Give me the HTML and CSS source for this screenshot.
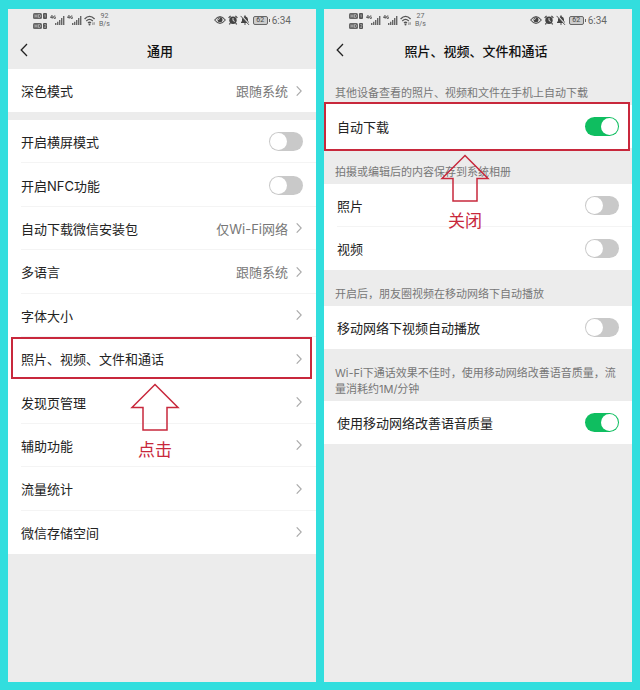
FILE: index.html
```html
<!DOCTYPE html>
<html lang="zh-CN">
<head>
    <meta charset="UTF-8">
    <meta name="viewport" content="width=device-width, initial-scale=1.0">
    <title>通用</title>
    <link rel="stylesheet" href="styles.css">
</head>
<body>
    <svg class="sprite" aria-hidden="true">
        <symbol id="i-hd" viewBox="0 0 15 17">
            <rect x="0" y="1" width="9" height="6" rx="1.5" fill="#666"/>
            <rect x="10" y="1" width="4" height="6" rx="1" fill="#555"/>
            <rect x="0" y="11" width="9" height="6" rx="1.5" fill="#666"/>
            <rect x="10" y="11" width="4" height="6" rx="1" fill="#555"/>
            <path d="M2 2.5v3M4 2.5v3M2 4h2M5.5 2.5v3h1l1-1v-1l-1-1zM2 12.5v3M4 12.5v3M2 14h2M5.5 12.5v3h1l1-1v-1l-1-1zM11.5 3l.7-.5v3M11.2 12.6h1.6v1.2l-1.4 1.6h1.6" fill="none" stroke="#ccc" stroke-width=".6"/>
        </symbol>
        <symbol id="i-signal" viewBox="0 0 15 12">
            <path d="M1.8 1.3L.5 3.5h2.2M2.2 1.3v3.4M5.4 2H4L3.5 3 4 4.4h1.4V3.2h-.6" fill="none" stroke="#555" stroke-width=".9"/>
            <path d="M5 9h1.4v2H5zM7 7.8h1.4V11H7zM9 6h1.4v5H9zM11 4h1.4v7H11zM13 2h1.4v9H13z" fill="#666"/>
        </symbol>
        <symbol id="i-wifi" viewBox="0 0 12 11">
            <path d="M.6 4Q5.5-1.2 10.6 4M2.3 6Q5.5 2.8 8.8 6M4 7.9Q5.5 6.5 7 7.9" fill="none" stroke="#555" stroke-width="1.3"/>
            <circle cx="5.5" cy="9.4" r="1" fill="#555"/>
            <path d="M8.8 7.4v2.6M10.2 7.2v2.6" stroke="#777" stroke-width=".8"/>
        </symbol>
        <symbol id="i-eye" viewBox="0 0 12 10">
            <path d="M.7 5Q6-1.8 11.3 5 6 11.8.7 5z" fill="none" stroke="#555" stroke-width="1.1"/>
            <circle cx="6" cy="4.8" r="2.5" fill="#444"/>
            <path d="M5.8 3.2A1.6 1.6 0 0 0 4.6 5" fill="none" stroke="#eee" stroke-width=".8"/>
        </symbol>
        <symbol id="i-alarm" viewBox="0 0 10 10">
            <circle cx="5" cy="5.3" r="3.7" fill="#444"/>
            <path d="M.6 2.8L2.6.8M9.4 2.8L7.4.8M2.4 8.3L1.2 9.4M7.6 8.3l1.2 1.1" stroke="#444" stroke-width="1.2"/>
            <path d="M5 3v2.5l1.7.9" fill="none" stroke="#eee" stroke-width=".9"/>
        </symbol>
        <symbol id="i-bell" viewBox="0 0 10 10">
            <path d="M1 8V7.3L2 6V4.2Q2.2 2 4.3 1.5V.6h1.4v.9Q7.8 2 8 4.2V6l1 1.3V8zM4 8.6h2Q5.8 9.8 5 9.8T4 8.6z" fill="#444"/>
            <path d="M1.3.5l8.2 9" stroke="#ececec" stroke-width="1.2"/>
            <path d="M.6.9l8.4 9" stroke="#444" stroke-width=".9"/>
        </symbol>
        <symbol id="i-back" viewBox="0 0 8 14">
            <path d="M7 1L1.2 7 7 13" fill="none" stroke="#222" stroke-width="1.3"/>
        </symbol>
        <symbol id="i-more" viewBox="0 0 6 10">
            <path d="M.7.3L5.2 5 .7 9.7" fill="none" stroke="#aaa" stroke-width="1.1"/>
        </symbol>
        <symbol id="i-arrow" viewBox="0 0 50 48">
            <path d="M25 1.5L48 24.5H37V47H13V24.5H2z" fill="none" stroke="#c8283c" stroke-width="1.5"/>
        </symbol>
    </svg>

    <main class="screens">
        <section class="screen">
            <div class="status">
                <svg class="hd"><use href="#i-hd"/></svg>
                <svg class="signal"><use href="#i-signal"/></svg>
                <svg class="signal"><use href="#i-signal"/></svg>
                <svg class="wifi"><use href="#i-wifi"/></svg>
                <span class="speed">92<br>B/s</span>
                <svg class="eye"><use href="#i-eye"/></svg>
                <svg class="small"><use href="#i-alarm"/></svg>
                <svg class="small"><use href="#i-bell"/></svg>
                <span class="battery">62</span>
                <span class="time">6:34</span>
            </div>
            <header class="title-bar">
                <button class="back" type="button" aria-label="返回"><svg><use href="#i-back"/></svg></button>
                <h1>通用</h1>
            </header>

            <div class="group">
                <a class="row" href="#">深色模式 <span class="value">跟随系统</span><svg class="more"><use href="#i-more"/></svg></a>
            </div>
            <div class="group long">
                <label class="row">开启横屏模式 <input class="switch" type="checkbox"></label>
                <label class="row">开启NFC功能 <input class="switch" type="checkbox"></label>
                <a class="row" href="#">自动下载微信安装包 <span class="value">仅Wi-Fi网络</span><svg class="more"><use href="#i-more"/></svg></a>
                <a class="row" href="#">多语言 <span class="value">跟随系统</span><svg class="more"><use href="#i-more"/></svg></a>
                <a class="row" href="#">字体大小 <svg class="more"><use href="#i-more"/></svg></a>
                <div class="marked">
                    <a class="row" href="#">照片、视频、文件和通话 <svg class="more"><use href="#i-more"/></svg></a>
                    <div class="hint hint-click"><svg><use href="#i-arrow"/></svg>点击</div>
                </div>
                <a class="row" href="#">发现页管理 <svg class="more"><use href="#i-more"/></svg></a>
                <a class="row" href="#">辅助功能 <svg class="more"><use href="#i-more"/></svg></a>
                <a class="row" href="#">流量统计 <svg class="more"><use href="#i-more"/></svg></a>
                <a class="row" href="#">微信存储空间 <svg class="more"><use href="#i-more"/></svg></a>
            </div>
        </section>

        <section class="screen">
            <div class="status">
                <svg class="hd"><use href="#i-hd"/></svg>
                <svg class="signal"><use href="#i-signal"/></svg>
                <svg class="signal"><use href="#i-signal"/></svg>
                <svg class="wifi"><use href="#i-wifi"/></svg>
                <span class="speed">27<br>B/s</span>
                <svg class="eye"><use href="#i-eye"/></svg>
                <svg class="small"><use href="#i-alarm"/></svg>
                <svg class="small"><use href="#i-bell"/></svg>
                <span class="battery">62</span>
                <span class="time">6:34</span>
            </div>
            <header class="title-bar">
                <button class="back" type="button" aria-label="返回"><svg><use href="#i-back"/></svg></button>
                <h1>照片、视频、文件和通话</h1>
            </header>

            <p class="note">其他设备查看的照片、视频和文件在手机上自动下载</p>
            <div class="group marked marked-wide">
                <label class="row">自动下载 <input class="switch" type="checkbox" checked></label>
                <div class="hint hint-close"><svg><use href="#i-arrow"/></svg>关闭</div>
            </div>
            <p class="note">拍摄或编辑后的内容保存到系统相册</p>
            <div class="group">
                <label class="row">照片 <input class="switch" type="checkbox"></label>
                <label class="row">视频 <input class="switch" type="checkbox"></label>
            </div>
            <p class="note">开启后，朋友圈视频在移动网络下自动播放</p>
            <div class="group">
                <label class="row">移动网络下视频自动播放 <input class="switch" type="checkbox"></label>
            </div>
            <p class="note">Wi-Fi下通话效果不佳时，使用移动网络改善语音质量，流量消耗约1M/分钟</p>
            <div class="group">
                <label class="row">使用移动网络改善语音质量 <input class="switch" type="checkbox" checked></label>
            </div>
        </section>
    </main>
</body>
</html>
```

FILE: styles.css
```css
* {
    box-sizing: border-box;
}
body {
    margin: 0;
    background-color: #32dede;
    font-family: Inter, "Noto Sans CJK SC", sans-serif;
    font-size: 13px;
    color: #222;
}
.sprite {
    display: none;
}
.screens {
    display: grid;
    grid-template-columns: 1fr 1fr;
    gap: 8px;
    min-height: 100vh;
    padding: 9px 8px 8px;
}
.screen {
    background-color: #ececec;
}

/* status bar */
.status {
    display: flex;
    align-items: center;
    height: 22px;
    padding: 0 25px;
    font-family: Roboto, sans-serif;
    color: #666;
}
.hd {
    width: 15px;
    height: 17px;
}
.signal {
    width: 15px;
    height: 12px;
    margin-left: 2px;
}
.wifi {
    width: 12px;
    height: 11px;
    margin-left: 2px;
}
.speed {
    margin-left: 3px;
    font-size: 7px;
    line-height: 8px;
    text-align: center;
}
.eye {
    width: 12px;
    height: 10px;
    margin-left: auto;
}
.small {
    width: 10px;
    height: 10px;
    margin-left: 2px;
}
.battery {
    position: relative;
    width: 15px;
    height: 9px;
    margin: 0 4px 0 3px;
    border: 1px solid #666;
    border-radius: 2px;
    background-color: #ccc;
    font-size: 7px;
    line-height: 7px;
    text-align: center;
    color: #444;
}
.battery::after {
    content: "";
    position: absolute;
    top: 2px;
    right: -3px;
    width: 1px;
    height: 3px;
    background-color: #666;
}
.time {
    font-size: 10px;
}

.title-bar {
    display: grid;
    grid-template-columns: 32px 1fr 36px;
    align-items: center;
    height: 38px;
}
.title-bar h1 {
    margin: 0;
    font-size: 13px;
    font-weight: 500;
    text-align: center;
    color: #111;
}
.back {
    display: flex;
    padding: 4px 12px;
    border: none;
    background: none;
    cursor: pointer;
}
.back svg {
    width: 8px;
    height: 14px;
}

/* setting rows */
.group {
    background-color: #fff;
}
.group.long {
    display: grid;
    grid-auto-rows: 1fr;
    min-height: 434px;
    margin-top: 8px;
}
.row {
    display: flex;
    align-items: center;
    min-height: 43px;
    padding: 0 13px;
    color: inherit;
    text-decoration: none;
    background: linear-gradient(#f4f4f4, #f4f4f4) 13px 100% / 100% 1px no-repeat;
    cursor: pointer;
}
.row:last-child,
.marked .row {
    background: none;
}
.value {
    margin-left: auto;
    color: #777;
}
.more {
    width: 6px;
    height: 10px;
    margin: 0 1px 0 auto;
}
.value + .more {
    margin-left: 8px;
}
.note {
    margin: 0;
    padding: 16px 11px 4px;
    font-size: 11px;
    line-height: 16px;
    color: #777;
}

.switch {
    appearance: none;
    width: 34px;
    height: 19px;
    margin: 0 0 0 auto;
    padding: 1px;
    border-radius: 10px;
    background-color: #c9c9c9;
    cursor: pointer;
}
.switch::before {
    content: "";
    display: block;
    width: 17px;
    height: 17px;
    border-radius: 50%;
    background-color: #fff;
}
.switch:checked {
    background-color: #0fbe60;
}
.switch:checked::before {
    margin-left: auto;
}

/* red frame and arrow drawn over the rows */
.marked {
    position: relative;
}
.marked::after {
    content: "";
    position: absolute;
    inset: 0 4px 1px 3px;
    border: 2px solid #c8283c;
    box-shadow: inset 0 0 0 1px #fff;
    pointer-events: none;
}
.marked-wide::after {
    inset: -3px 2px -3px 0;
}
.hint {
    position: absolute;
    z-index: 1;
    top: 46px;
    display: flex;
    flex-direction: column;
    align-items: center;
    font-size: 17px;
    line-height: 38px;
    color: #c8283c;
    pointer-events: none;
}
.hint svg {
    width: 50px;
    height: 48px;
}
.hint-click {
    left: 122px;
}
.hint-close {
    left: 116px;
    top: 49px;
}
```
